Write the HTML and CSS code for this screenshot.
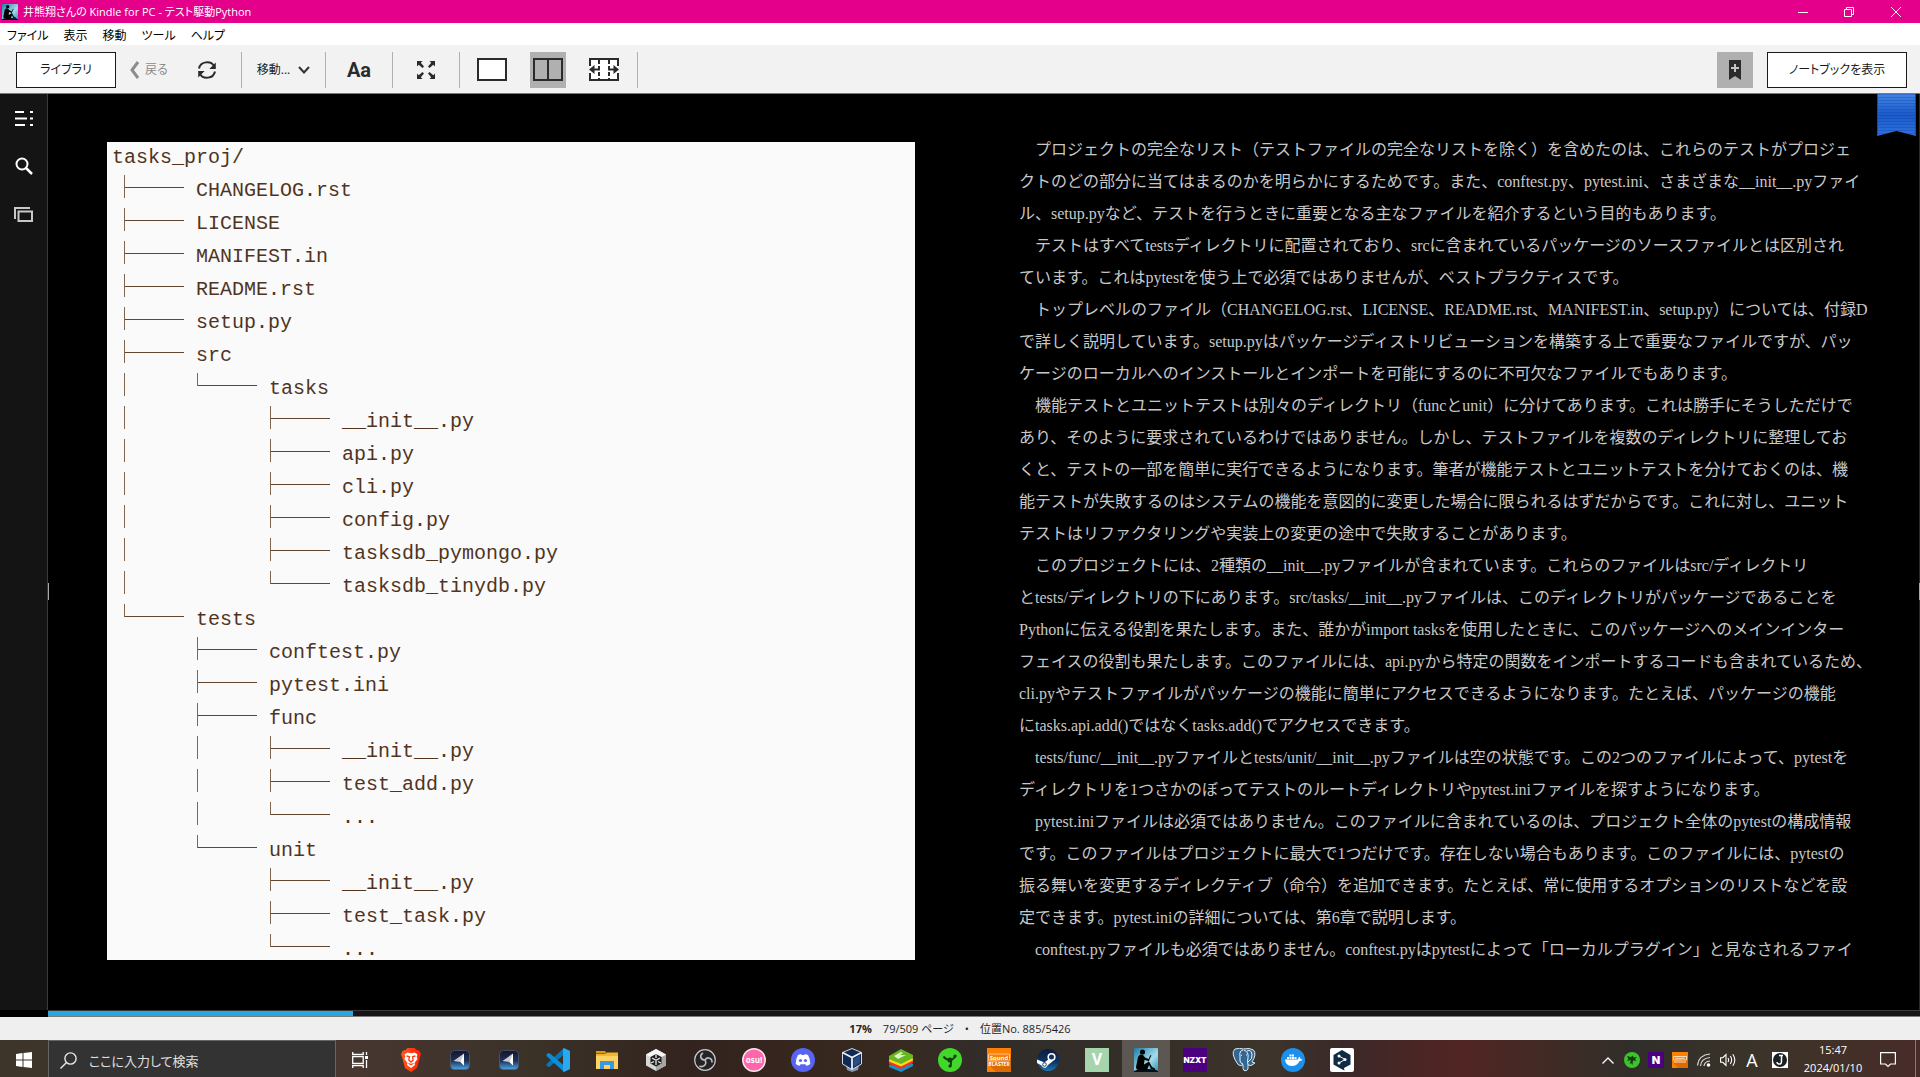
FILE: index.html
```html
<!DOCTYPE html>
<html lang="ja">
<head>
<meta charset="utf-8">
<title>井熊翔さんの Kindle for PC - テスト駆動Python</title>
<link rel="stylesheet" href="styles.css">
</head>
<body>
<svg class="defs" aria-hidden="true">
  <defs>
    <linearGradient id="sky" x1="0" y1="0" x2="1" y2="1"><stop offset="0" stop-color="#1c7fa6"/><stop offset=".6" stop-color="#a5dcec"/><stop offset="1" stop-color="#2b8fb5"/></linearGradient>
    <linearGradient id="navy" x1="0" y1="0" x2="0" y2="1"><stop offset="0" stop-color="#14152c"/><stop offset=".55" stop-color="#1f3259"/><stop offset="1" stop-color="#4aa8e8"/></linearGradient>
    <linearGradient id="steamfill" x1="0" y1="0" x2="0" y2="1"><stop offset="0" stop-color="#0d1b3d"/><stop offset=".6" stop-color="#0c3567"/><stop offset="1" stop-color="#1a7ab5"/></linearGradient>
    <linearGradient id="bravefill" x1="0" y1="0" x2="1" y2="0"><stop offset="0" stop-color="#ff5a1f"/><stop offset="1" stop-color="#ff2000"/></linearGradient>
    <linearGradient id="ribbonfill" x1="0" y1="0" x2="0" y2="1"><stop offset="0" stop-color="#4484e6"/><stop offset=".5" stop-color="#1a5acb"/><stop offset="1" stop-color="#2f73df"/></linearGradient>
    <pattern id="weave" width="4" height="3" patternUnits="userSpaceOnUse"><path d="M0 0h4v1H0z" fill="#0a3c9c" opacity=".3"/></pattern>
  </defs>
  <symbol id="kindle" viewBox="0 0 24 24"><rect width="24" height="24" rx="1" fill="url(#sky)"/><path d="M0 23c4-2 8-2 12-2s9 0 12 2v1H0z" fill="#031018"/><circle cx="8.500" cy="4" r="2.600"/><path d="M6 6.500 4 9 2 19q0 3 3 3h8l2-5 2 4 4 1v-1.500L18 19l-3-5.500-5 3 .5-4.500 4.500 1 .5-1.500-4.500-2L9 7z"/><path d="m13.500 13 3-6 .9.500-3 6z"/></symbol>
  <symbol id="plane" viewBox="0 0 20 20"><rect x=".5" y=".5" width="19" height="19" rx="4" fill="url(#navy)" stroke="#526078" stroke-width=".7"/><path d="M14 3.500v12L10.500 12 3.500 11z" fill="#c9ccd2"/><path d="m14 3.500-3.500 8.500 3.500 3.500z" fill="#fff"/></symbol>
</svg>

<header class="titlebar">
  <svg class="titlebar__icon" viewBox="0 0 24 24"><use href="#kindle"/></svg>
  <h1 class="titlebar__text">井熊翔さんの Kindle for PC - テスト駆動Python</h1>
  <button class="winbtn" aria-label="最小化"><svg width="10" height="10" viewBox="0 0 10 10"><path d="M0 5.500h10" /></svg></button>
  <button class="winbtn" aria-label="元に戻す"><svg width="10" height="10" viewBox="0 0 10 10"><path d="M.5 2.500h7v7h-7zM2.500 2.500v-2h7v7h-2"/></svg></button>
  <button class="winbtn" aria-label="閉じる"><svg width="10" height="10" viewBox="0 0 10 10"><path d="m0 0 10 10M10 0 0 10"/></svg></button>
</header>

<nav class="menubar">
  <button>ファイル</button><button>表示</button><button>移動</button><button>ツール</button><button>ヘルプ</button>
</nav>

<div class="toolbar">
  <button class="outlined outlined--library">ライブラリ</button>
  <button class="tool tool--back"><svg width="10" height="18" viewBox="0 0 10 18"><path d="M8 1 2 9l6 8" fill="none" stroke="#8c8c8c" stroke-width="3"/></svg>戻る</button>
  <button class="tool tool--sync" aria-label="同期"><svg width="20" height="20" viewBox="0 0 20 20"><g fill="none" stroke="#2b2b2b" stroke-width="2"><path d="M2 8.500C3.500 1 14 .5 17 6"/><path d="M18 11.500C16.500 19 6 19.500 3 14"/></g><path d="M18.800 2.500V9h-6.500zM1.200 17.500V11h6.500z" fill="#2b2b2b"/></svg></button>
  <div class="group group--goto"><button class="tool">移動...<svg width="12" height="8" viewBox="0 0 12 8"><path d="m1 1 5 5.500L11 1" fill="none" stroke="#333" stroke-width="2"/></svg></button></div>
  <div class="group"><button class="tool tool--type">Aa</button></div>
  <div class="group"><button class="tool" aria-label="全画面"><svg width="18" height="18" viewBox="0 0 18 18"><path d="M0 0h5.500L3.800 1.700 7 5.500 5.500 7 1.700 3.800 0 5.500zM18 0v5.500l-1.700-1.700L12.500 7 11 5.500l3.200-3.800L12.500 0zM0 18v-5.500l1.700 1.700L5.500 11 7 12.500l-3.200 3.800L5.500 18zM18 18h-5.500l1.700-1.700-3.200-3.800 1.500-1.500 3.800 3.200 1.700-1.700z" fill="#2b2b2b"/></svg></button></div>
  <div class="group group--columns">
    <button class="tool tool--square" aria-label="1列"><svg width="30" height="23" viewBox="0 0 30 23"><rect x="1" y="1" width="28" height="21" fill="#fff" stroke="#2b2b2b" stroke-width="2"/></svg></button>
    <button class="tool tool--square tool--active" aria-label="2列"><svg width="30" height="23" viewBox="0 0 30 23"><path d="M1 1h28v21H1zM15 1v21" fill="none" stroke="#2b2b2b" stroke-width="2"/></svg></button>
    <button class="tool tool--square" aria-label="複数列"><svg width="30" height="23" viewBox="0 0 30 23"><rect x="1" y="1" width="28" height="21" fill="#fff"/><g fill="none" stroke="#2b2b2b" stroke-width="2"><path d="M1 8V1h28v7M1 15v7h28v-7"/><path d="M10 2v19M20 2v19" stroke-dasharray="4 2"/><path d="M3 11.500h8M19 11.500h8"/></g><path d="m0 11.500 5.500-4.500v9zM30 11.500 24.500 7v9z" fill="#2b2b2b"/></svg></button>
  </div>
  <button class="tool tool--square tool--active tool--mark" aria-label="ブックマーク"><svg width="12" height="20" viewBox="0 0 12 20"><path d="M0 0h12v20l-6-4-6 4z" fill="#2b2b2b"/><path d="M6 4v8M2 8h8" stroke="#c4c4c4" stroke-width="2"/></svg></button>
  <button class="outlined outlined--notebook">ノートブックを表示</button>
</div>

<main class="reader">
  <nav class="sidebar">
    <button aria-label="目次"><svg width="18" height="15" viewBox="0 0 18 15"><path d="M0 1h9M0 7.500h12M0 14h10M15 1h3M15 7.500h3M15 14h3" stroke="#fff" stroke-width="2"/></svg></button>
    <button aria-label="検索"><svg width="18" height="18" viewBox="0 0 18 18"><circle cx="7" cy="7" r="5.500" fill="none" stroke="#fff" stroke-width="2"/><path d="m11 11 6 6" stroke="#fff" stroke-width="2.500"/></svg></button>
    <button aria-label="フラッシュカード"><svg width="19" height="15" viewBox="0 0 19 15"><path d="M1 12V1h15M4.500 4.500h13.500v9.500H4.500z" fill="none" stroke="#c8c8c8" stroke-width="2"/></svg></button>
  </nav>
  <article class="book">
    <figure class="tree">
      <div class="row row--root">tasks_proj/</div>
      <div class="row"><i class="tee"></i>CHANGELOG.rst</div>
      <div class="row"><i class="tee"></i>LICENSE</div>
      <div class="row"><i class="tee"></i>MANIFEST.in</div>
      <div class="row"><i class="tee"></i>README.rst</div>
      <div class="row"><i class="tee"></i>setup.py</div>
      <div class="row"><i class="tee"></i>src</div>
      <div class="row"><i class="bar"></i><i class="end"></i>tasks</div>
      <div class="row"><i class="bar"></i><i class="gap"></i><i class="tee"></i>__init__.py</div>
      <div class="row"><i class="bar"></i><i class="gap"></i><i class="tee"></i>api.py</div>
      <div class="row"><i class="bar"></i><i class="gap"></i><i class="tee"></i>cli.py</div>
      <div class="row"><i class="bar"></i><i class="gap"></i><i class="tee"></i>config.py</div>
      <div class="row"><i class="bar"></i><i class="gap"></i><i class="tee"></i>tasksdb_pymongo.py</div>
      <div class="row"><i class="bar"></i><i class="gap"></i><i class="end"></i>tasksdb_tinydb.py</div>
      <div class="row"><i class="end"></i>tests</div>
      <div class="row"><i class="gap"></i><i class="tee"></i>conftest.py</div>
      <div class="row"><i class="gap"></i><i class="tee"></i>pytest.ini</div>
      <div class="row"><i class="gap"></i><i class="tee"></i>func</div>
      <div class="row"><i class="gap"></i><i class="bar"></i><i class="tee"></i>__init__.py</div>
      <div class="row"><i class="gap"></i><i class="bar"></i><i class="tee"></i>test_add.py</div>
      <div class="row"><i class="gap"></i><i class="bar"></i><i class="end"></i>...</div>
      <div class="row"><i class="gap"></i><i class="end"></i>unit</div>
      <div class="row"><i class="gap"></i><i class="gap"></i><i class="tee"></i>__init__.py</div>
      <div class="row"><i class="gap"></i><i class="gap"></i><i class="tee"></i>test_task.py</div>
      <div class="row row--last"><i class="gap"></i><i class="gap"></i><i class="end"></i>...</div>
    </figure>
    <section class="prose">
      <p>プロジェクトの完全なリスト（テストファイルの完全なリストを除く）を含めたのは、これらのテストがプロジェ<br>クトのどの部分に当てはまるのかを明らかにするためです。また、conftest.py、pytest.ini、さまざまな__init__.pyファイ<br>ル、setup.pyなど、テストを行うときに重要となる主なファイルを紹介するという目的もあります。</p>
      <p>テストはすべてtestsディレクトリに配置されており、srcに含まれているパッケージのソースファイルとは区別され<br>ています。これはpytestを使う上で必須ではありませんが、ベストプラクティスです。</p>
      <p>トップレベルのファイル（CHANGELOG.rst、LICENSE、README.rst、MANIFEST.in、setup.py）については、付録D<br>で詳しく説明しています。setup.pyはパッケージディストリビューションを構築する上で重要なファイルですが、パッ<br>ケージのローカルへのインストールとインポートを可能にするのに不可欠なファイルでもあります。</p>
      <p>機能テストとユニットテストは別々のディレクトリ（funcとunit）に分けてあります。これは勝手にそうしただけで<br>あり、そのように要求されているわけではありません。しかし、テストファイルを複数のディレクトリに整理してお<br>くと、テストの一部を簡単に実行できるようになります。筆者が機能テストとユニットテストを分けておくのは、機<br>能テストが失敗するのはシステムの機能を意図的に変更した場合に限られるはずだからです。これに対し、ユニット<br>テストはリファクタリングや実装上の変更の途中で失敗することがあります。</p>
      <p>このプロジェクトには、2種類の__init__.pyファイルが含まれています。これらのファイルはsrc/ディレクトリ<br>とtests/ディレクトリの下にあります。src/tasks/__init__.pyファイルは、このディレクトリがパッケージであることを<br>Pythonに伝える役割を果たします。また、誰かがimport tasksを使用したときに、このパッケージへのメインインター<br>フェイスの役割も果たします。このファイルには、api.pyから特定の関数をインポートするコードも含まれているため、<br>cli.pyやテストファイルがパッケージの機能に簡単にアクセスできるようになります。たとえば、パッケージの機能<br>にtasks.api.add()ではなくtasks.add()でアクセスできます。</p>
      <p>tests/func/__init__.pyファイルとtests/unit/__init__.pyファイルは空の状態です。この2つのファイルによって、pytestを<br>ディレクトリを1つさかのぼってテストのルートディレクトリやpytest.iniファイルを探すようになります。</p>
      <p>pytest.iniファイルは必須ではありません。このファイルに含まれているのは、プロジェクト全体のpytestの構成情報<br>です。このファイルはプロジェクトに最大で1つだけです。存在しない場合もあります。このファイルには、pytestの<br>振る舞いを変更するディレクティブ（命令）を追加できます。たとえば、常に使用するオプションのリストなどを設<br>定できます。pytest.iniの詳細については、第6章で説明します。</p>
      <p>conftest.pyファイルも必須ではありません。conftest.pyはpytestによって「ローカルプラグイン」と見なされるファイ</p>
    </section>
    <svg class="ribbon" width="39" height="42" viewBox="0 0 39 42"><path d="M0 0h39v42l-19.500-5L0 42z" fill="url(#ribbonfill)"/><path d="M0 0h39v42l-19.500-5L0 42z" fill="url(#weave)"/><path d="M.5 0v41M38.500 0v41" stroke="#0f4bc0"/></svg>
    <span class="handle handle--prev"></span>
    <span class="handle handle--next"></span>
  </article>
</main>

<div class="progress"><div class="progress__bar"></div></div>

<footer class="status"><b>17%</b><span>79/509 ページ</span><span>•</span><span>位置No. 885/5426</span></footer>

<div class="taskbar">
  <button class="cell" aria-label="スタート"><svg width="16" height="16" viewBox="0 0 16 16"><path d="m0 2 6.500-.9v6.400H0zM7.500 1 16 0v7.500H7.500zM0 8.500h6.500v6.400L0 14zM7.500 8.500H16V16l-8.500-1.100z" fill="#fff"/></svg></button>
  <label class="search"><svg width="17" height="17" viewBox="0 0 17 17"><g fill="none" stroke="#e8e8e8" stroke-width="1.400"><circle cx="10.500" cy="6.500" r="5.600"/><path d="m6.500 10.500-6 6"/></g></svg><input type="text" placeholder="ここに入力して検索" aria-label="検索"></label>
  <button class="cell" aria-label="タスクビュー"><svg width="16" height="16" viewBox="0 0 16 16"><path d="M.7 0v2.500h10.500V0M.7 16v-2.500h10.500V16M.7 4.700h10.500v6.600H.7zM14.500 0v3M14.500 8v8" fill="none" stroke="#fff" stroke-width="1.300"/><path d="M13 4h3v3h-3z" fill="#fff"/></svg></button>
  <div class="apps">
    <button class="cell" aria-label="Brave"><svg width="20" height="24" viewBox="0 0 20 24"><path d="m4.500 2 2-2h7l2 2 2.500.5L20 6l-1 3-3 11-6 4-6-4L1 9 0 6l2-3.500z" fill="url(#bravefill)"/><path d="m3.500 6.500 3-2 3.500.8 3.500-.8 3 2-.8 2 .8 2.500-3 4 .5 2L10 20l-4-3 .5-2-3-4 .8-2.500z" fill="#fff"/><path d="m5.500 8 3 .7-.7 3.300L10 14l2.200-2-.7-3.300 3-.7M7.500 15.500l2.500 1 2.500-1" fill="none" stroke="#ff3b14" stroke-width="1.300"/></svg></button>
    <button class="cell" aria-label="ランチャー"><svg width="20" height="20"><use href="#plane"/></svg></button>
    <button class="cell" aria-label="ランチャー 2"><svg width="20" height="20"><use href="#plane"/></svg></button>
    <button class="cell" aria-label="Visual Studio Code"><svg width="24" height="24" viewBox="0 0 24 24"><path d="M18 0v6.500L4 18.500 2.500 19 .5 17.500v-1.500z" fill="#0877b9"/><path d="m2.500 5 1.500.5L18 17.500V24L.5 8V6.500z" fill="#0b8dd8"/><path d="m18 0 6 3v18l-6 3-1-1V1z" fill="#28aaf3"/></svg></button>
    <button class="cell" aria-label="エクスプローラー"><svg width="22" height="18" viewBox="0 0 22 18"><path d="M0 0h9l2 2.500H0z" fill="#dc9a10"/><path d="M0 3h22v15H0z" fill="#ffd262"/><path d="M0 3h9l2-1.500h11V5H0z" fill="#f3b52c"/><path d="M4 10h14v8h-4v-4H8v4H4z" fill="#3b97df"/></svg></button>
    <button class="cell" aria-label="Unity"><svg width="20" height="22" viewBox="0 0 20 22"><path d="m10 0 10 5.500v11L10 22 0 16.500v-11z" fill="#d7d7d7"/><path d="m10 11 10-5.500v11L10 22z" fill="#a6a6a6"/><path d="m10 0 10 5.500L10 11 0 5.500z" fill="#f5f5f5"/><path d="m10 5 5.500 3v6.500L10 17.500l-5.500-3V8z" fill="#1c1c1c"/><path d="m6 9 4 2.200L14 9M10 11v5M10 5.500V9M5 14l3-1.500M15 14l-3-1.500" fill="none" stroke="#ececec" stroke-width="1.300"/></svg></button>
    <button class="cell" aria-label="OBS"><svg width="22" height="22" viewBox="0 0 22 22"><circle cx="11" cy="11" r="10.300" fill="#242427" stroke="#c7c7c7" stroke-width="1.200"/><g fill="none" stroke="#bcbcbc" stroke-width="1.600"><path d="M11 11C6 11 5.500 6 9 4"/><path d="M11 11c2.500-4 7.500-1.500 7 2.500"/><path d="M11 11c2.500 4.500-2 8-5.500 6"/></g></svg></button>
    <button class="cell" aria-label="osu!"><svg width="24" height="24" viewBox="0 0 24 24"><circle cx="12" cy="12" r="11.200" fill="#ff66ab" stroke="#f5e8ee" stroke-width="1.500"/><text x="12" y="14.500" text-anchor="middle" class="logo-text logo-osu">osu!</text></svg></button>
    <button class="cell" aria-label="Discord"><svg width="24" height="24" viewBox="0 0 24 24"><circle cx="12" cy="12" r="12" fill="#5865f2"/><path d="m7 7 3-1 .6 1h2.800l.6-1 3 1q2.500 4 2.300 9-2 1.600-4 1.800l-.9-1.500H9.600l-.9 1.500q-2-.2-4-1.800Q4.500 11 7 7z" fill="#fff"/><circle cx="9.500" cy="12.500" r="1.600" fill="#5865f2"/><circle cx="14.500" cy="12.500" r="1.600" fill="#5865f2"/></svg></button>
    <button class="cell" aria-label="VirtualBox"><svg width="20" height="24" viewBox="0 0 20 24"><path d="m4 17 1 5 5 2 6-2 1-5z" fill="#8795ac"/><path d="m10 .5 9.500 4V16L10 21.500.5 16V4.500z" fill="#102a53" stroke="#cfdbe9"/><path d="M.5 4.500 10 9.500l9.500-5M10 9.500v12" fill="none" stroke="#e8f0f8" stroke-width="1.800"/><path d="m11.500 11 6.500-4v8l-6.500 4z" fill="#284f83"/></svg></button>
    <button class="cell" aria-label="BlueStacks"><svg width="24" height="23" viewBox="0 0 24 23"><path d="m0 16 12-5 12 4v2l-12 6-12-5z" fill="#1291d0"/><path d="m0 13 12-5 12 4v2l-12 6-12-5z" fill="#ed3324"/><path d="m0 10.500 12-5 12 4v2l-12 6-12-5z" fill="#ffd51d"/><path d="M0 7 12 0l12 6v3l-12 6L0 10z" fill="#65b81d"/><path d="m5 7 7-4 2 1-3 2h6l-8 4z" fill="#dff1cc"/></svg></button>
    <button class="cell" aria-label="Razer Cortex"><svg width="24" height="24" viewBox="0 0 24 24"><circle cx="12" cy="12" r="12" fill="#41d72b"/><g fill="none" stroke="#123d0d" stroke-width="2"><path d="M12 12Q8 12 5.500 8.500M12 12q4-.5 5.500-4.500M12 12q2 3 0 7"/></g><circle cx="12" cy="12" r="2.500" fill="#123d0d"/><circle cx="17" cy="8" r="1.600" fill="#123d0d"/><circle cx="12" cy="18" r="1.600" fill="#123d0d"/></svg></button>
    <button class="cell" aria-label="Sound Blaster"><svg width="24" height="24" viewBox="0 0 24 24"><path d="M0 0h24v24H0z" fill="#ff7f00"/><path d="m2 17 7 7h15V11l-2-3z" fill="#d96b00"/><rect x="1.500" y="6" width="21" height="7" rx="1" fill="none" stroke="#ffe2c4" stroke-width=".7"/><text x="12" y="11.500" text-anchor="middle" class="logo-text logo-sound">Sound</text><text x="12" y="17.500" text-anchor="middle" class="logo-text logo-blaster">BLASTER</text></svg></button>
    <button class="cell" aria-label="Steam"><svg width="22" height="22" viewBox="0 0 22 22"><circle cx="11" cy="11" r="11" fill="url(#steamfill)"/><path d="m0 10.500 7.500 3L13 9l3 3-5 4-2 2.500q-3 1-4.500-2L0 14z" fill="#fff"/><circle cx="14.500" cy="8" r="3.300" fill="#14305c" stroke="#fff" stroke-width="1.600"/><circle cx="7.500" cy="15.500" r="1.800" fill="none" stroke="#17406f"/></svg></button>
    <button class="cell" aria-label="V"><span class="tile tile--v">V</span></button>
    <button class="cell cell--current" aria-label="Kindle"><svg width="24" height="24"><use href="#kindle"/></svg></button>
    <button class="cell" aria-label="NZXT CAM"><span class="tile tile--nzxt">NZXT</span></button>
    <button class="cell" aria-label="PostgreSQL"><svg width="24" height="24" viewBox="0 0 24 24"><path d="M3 1q5-1.500 8 0 7-1.500 10.500 1Q25 6 20 14l3 1-4 2.500-3-.5v4q-1 2.500-4 1.500-1.500-1-1-6-2 2.500-5 0Q-2 5 3 1z" fill="#336791" stroke="#dce8f2"/><path d="M11 2q-4 1-3 6v5q1 3 3 3M12 2q5 2 4 8-1 3 0 7M15 3q4-2 5 3t-4 8M9 7l1 .5M14 7h1" fill="none" stroke="#e8f1f7"/></svg></button>
    <button class="cell" aria-label="Docker"><svg width="24" height="24" viewBox="0 0 24 24"><circle cx="12" cy="12" r="12" fill="#1d90ed"/><path d="M4 11.500h13l1-3q1.500 1 1.500 2.500l2 .5q-1 1.500-3 1.500-2 5-8 5-6 0-6.500-6.500zM6 9h2v2H6zM8.500 9h2v2h-2zM11 9h2v2h-2zM13.500 9h2v2h-2zM8.500 6.500h2v2h-2zM11 6.500h2v2h-2z" fill="#fff"/></svg></button>
    <button class="cell" aria-label="DeepL"><svg width="24" height="24" viewBox="0 0 24 24"><rect width="24" height="24" rx="2" fill="#fff"/><path d="m12 2 8.500 5v9.500L14 20l.5 2.500-4-2L3.500 16.500V7z" fill="#0f2b46"/><path d="m9 8 6 3.500L9 15" fill="none" stroke="#fff"/><g fill="#fff"><circle cx="9" cy="8" r="1.500"/><circle cx="15" cy="11.500" r="1.500"/><circle cx="9" cy="15" r="1.500"/></g></svg></button>
  </div>
  <div class="tray">
    <button class="tray__cell" aria-label="隠れているアイコン"><svg width="12" height="7" viewBox="0 0 12 7"><path d="m.5 6.500 5.500-5.500 5.500 5.500" fill="none" stroke="#fff" stroke-width="1.300"/></svg></button>
    <button class="tray__cell" aria-label="Razer"><svg width="16" height="16" viewBox="0 0 16 16"><circle cx="8" cy="8" r="8" fill="#3cc32b"/><path d="m3 4 4 1 2-1.500.5 2L13 5l-2 2 1.500 2L9 8.500 8.500 13 7 11l-1.500 1L7 8 3 9l1.500-2z" fill="#103e0c"/></svg></button>
    <button class="tray__cell" aria-label="NZXT"><span class="tile tile--n">N</span></button>
    <button class="tray__cell" aria-label="Sound Blaster"><svg width="16" height="16" viewBox="0 0 16 16"><path d="M0 0h16v16H0z" fill="#ff7f00"/><path d="m1 11 5 5h10V7l-1-2z" fill="#d96b00"/><path d="M1.500 4.500h13v3.500h-13zM3 6.300h10M2 10h12" fill="none" stroke="#ffdcb8"/></svg></button>
    <button class="tray__cell" aria-label="ネットワーク"><svg width="14" height="14" viewBox="0 0 14 14"><g fill="none" stroke="#d9d9d9" stroke-width="1.200"><path d="M.5 12.500Q1.500 2 13 1"/><path d="M3.500 13Q4 5.500 13 4.500"/><path d="M7 13q.5-4.500 6-5"/></g><circle cx="11.500" cy="12" r="1.800" fill="#fff"/></svg></button>
    <button class="tray__cell" aria-label="音量"><svg width="16" height="14" viewBox="0 0 16 14"><g fill="none" stroke="#fff" stroke-width="1.100"><path d="M.6 4.700h2.200L6 1.500v11L2.800 9.300H.6z"/><path d="M8 5q1.300 2 0 4M10.300 3q2.700 4 0 8M12.800 1.200q4 5.800 0 11.600"/></g></svg></button>
    <button class="tray__cell tray__ime">A</button>
    <button class="tray__cell tray__cell--wide" aria-label="IME"><svg width="16" height="16" viewBox="0 0 16 16"><path d="M0 0h16v16H0z" fill="#fff"/><circle cx="8" cy="8" r="7" fill="#1b1f24"/><path d="M7 3.500h4M9.500 3.500v6q0 3-3 2.500-1.500-.5-1.500-2" fill="none" stroke="#fff" stroke-width="1.500"/></svg></button>
    <button class="clock"><time>15:47</time><time>2024/01/10</time></button>
    <button class="notice" aria-label="通知"><svg width="16" height="16" viewBox="0 0 16 16"><path d="M.6.600h14.800v11.400h-4.900L8 14.500 5.500 12H.6z" fill="none" stroke="#fff" stroke-width="1.200"/></svg></button>
    <button class="peek" aria-label="デスクトップの表示"></button>
  </div>
</div>
</body>
</html>
```
FILE: styles.css
```css
* { box-sizing: border-box; }

body {
  margin: 0;
  min-height: 100vh;
  display: flex;
  flex-direction: column;
  overflow: hidden;
  font: 12px/16px "Open Sans", "Noto Sans CJK JP", sans-serif;
  font-feature-settings: "palt";
  color: #1a1a1a;
  background: #000;
}

button {
  margin: 0;
  padding: 0;
  border: 0;
  background: none;
  color: inherit;
  font: inherit;
  font-feature-settings: inherit;
  white-space: nowrap;
}

svg { display: block; flex: none; }
.defs { position: absolute; width: 0; height: 0; }

/* window frame */
.titlebar {
  height: 23px;
  display: flex;
  align-items: center;
  padding-left: 2px;
  background: #e5008c;
  color: #fff;
}
.titlebar__icon { width: 16px; height: 16px; margin-right: 5px; }
.titlebar__text { flex: 1; margin: 0; font-size: 11px; font-weight: 400; }
.winbtn { width: 46px; height: 20px; display: flex; justify-content: center; align-items: center; }
.winbtn:last-child { width: 48px; }
.winbtn path { fill: none; stroke: #fff; }

.menubar {
  height: 22px;
  display: flex;
  align-items: center;
  gap: 15px;
  padding: 3px 0 0 7px;
  background: #fff;
  color: #000;
}

/* toolbar */
.toolbar {
  height: 49px;
  display: flex;
  align-items: center;
  padding: 1px 13px 0 16px;
  background: #f2f2f2;
  border-bottom: 1px solid #7a7a7a;
}
.outlined { height: 36px; border: 1px solid #1a1a1a; background: #fff; }
.outlined--library { width: 100px; }
.outlined--notebook { width: 140px; }
.tool { height: 36px; display: flex; align-items: center; justify-content: center; gap: 8px; }
.tool--back { width: 66px; gap: 5px; color: #8c8c8c; }
.tool--sync { width: 50px; margin-right: 9px; }
.group { width: 67px; display: flex; justify-content: center; border-left: 1px solid #b0b0b0; }
.group--goto { width: 84px; }
.tool--type { font: bold 20px/24px Roboto, sans-serif; color: #2b2b2b; }
.group--columns { width: 179px; gap: 20px; padding-right: 1px; border-right: 1px solid #b0b0b0; }
.tool--square { width: 36px; }
.tool--active { background: #b0b0b0; }
.tool--mark { margin: 0 14px 0 auto; }

/* reading area */
.reader { flex: 1; display: grid; grid-template-columns: 48px minmax(0, 1fr); }
.sidebar {
  display: flex;
  flex-direction: column;
  background: #141414;
  border-right: 1px solid #3a3a3a;
}
.sidebar button { height: 48px; display: flex; align-items: center; justify-content: center; }
.book {
  position: relative;
  display: grid;
  grid-template-columns: minmax(0, 808fr) minmax(0, 842fr);
  column-gap: 104px;
  align-items: start;
  padding: 40px 58px 44px 59px;
  border-right: 1px solid #2a2a2a;
  color: #c8c8c8;
}
.ribbon { position: absolute; top: 0; right: 3px; }
.handle { position: absolute; top: 489px; width: 1px; height: 17px; background: #aaa; }
.handle--prev { left: 0; }
.handle--next { right: -1px; }

/* directory tree figure */
.tree {
  margin: 8px 0 0;
  padding-left: 17px;
  background: #fafafa;
  color: #50341f;
  font: 20px/33px "Liberation Mono", monospace;
}
.row { height: 33px; display: flex; white-space: pre; }
.row--root { height: 32px; margin-left: -12px; line-height: 31px; }
.row--last { height: 27px; }
.tee, .end, .bar, .gap { width: 73px; height: 24px; flex: none; }
.tee, .end, .bar { border-left: 1px solid #80664f; margin-top: 1px; height: 23px; }
.tee, .end { background: linear-gradient(#62452f, #62452f) 0 12px / 59px 1px no-repeat; }
.end { height: 13px; }
.row i:last-of-type { width: 72px; }

.prose {
  font: 16px/32px "Liberation Serif", "Noto Sans CJK JP", serif;
  font-feature-settings: normal;
  white-space: nowrap;
}
.prose p { margin: 0; text-indent: 16px; }

/* progress and status */
.progress { height: 7px; margin-left: 48px; background: #141414; border-top: 1px solid #3a3a3a; border-bottom: 1px solid #7a7a7a; }
.progress__bar { height: 5px; width: 305px; background: #29a8e0; }
.status {
  height: 23px;
  display: flex;
  align-items: center;
  justify-content: center;
  gap: 11px;
  background: #efefef;
  color: #262626;
  font-size: 11px;
}

/* taskbar */
.taskbar {
  height: 37px;
  display: flex;
  background: linear-gradient(90deg, #3d352a 0, #3d352a 15%, #483731 18%, #3a3127 28%, #33231e 36%, #38291f 46%, #302d2a 52%, #352e28 60%, #3d352b 66%, #3a2828 70%, #522523 76%, #402b26 81%, #302e2a 85%, #3c3429 92%, #482b28 100%);
  color: #fff;
}
.cell { width: 48px; height: 37px; padding-top: 3px; display: flex; align-items: center; justify-content: center; }
.cell--current { background: #5d5753; }
.search {
  width: 288px;
  display: flex;
  align-items: center;
  gap: 12px;
  padding: 3px 0 0 11px;
  background: #333;
  border: solid #666;
  border-width: 1px 1px 0;
}
.search input {
  flex: 1;
  min-width: 0;
  padding: 0;
  border: 0;
  background: none;
  color: #fff;
  font: 13px/20px "Open Sans", "Noto Sans CJK JP", sans-serif;
  font-feature-settings: "palt";
}
.search input::placeholder { color: #e0e0e0; opacity: 1; }
.apps { display: flex; gap: 1px; margin-left: 3px; }
.tile { width: 24px; height: 24px; display: grid; place-items: center; font-weight: 700; }
.tile--v { background: #a5d4ad; font: bold 16px/24px Roboto, sans-serif; }
.tile--nzxt { background: #4b0080; font: 900 8px/24px Inter, sans-serif; }
.tile--n { width: 16px; height: 16px; background: #4b0080; font: 900 11px/16px Inter, sans-serif; }
.logo-text { fill: #fff; font-family: "Open Sans", sans-serif; font-weight: 700; }
.logo-sound { font-size: 6px; }
.logo-blaster { font-size: 5px; }
.logo-osu { font-size: 8px; }

.tray { display: flex; margin-left: auto; }
.tray__cell { width: 24px; padding-top: 3px; display: flex; align-items: center; justify-content: center; }
.tray__cell--wide { width: 32px; }
.tray__ime { font-size: 18px; }
.clock { width: 74px; padding-top: 1px; display: flex; flex-direction: column; line-height: 18px; align-items: center; font-size: 11px; }
.notice { width: 36px; margin-right: 9px; padding-top: 3px; display: flex; align-items: center; justify-content: center; }
.peek { width: 5px; border-left: 1px solid #8a7a76; }
```
